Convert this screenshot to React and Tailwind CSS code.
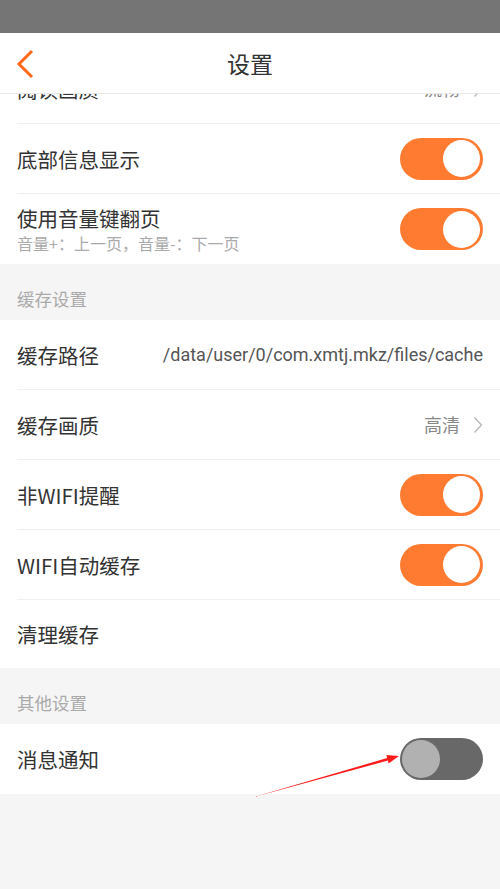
import React from "react";

const font = { fontFamily: '"Noto Sans CJK SC", "Noto Sans", sans-serif' };

function Toggle({ on }) {
  if (on) {
    return (
      <div className="w-[83px] h-[42px] rounded-full bg-[#fe7b31] flex items-center justify-end pr-[3px] shrink-0">
        <div className="w-[37px] h-[37px] rounded-full bg-white" />
      </div>
    );
  }
  return (
    <div className="w-[83px] h-[42px] rounded-full bg-[#686868] flex items-center justify-start pl-[2px] shrink-0">
      <div className="w-[38px] h-[38px] rounded-full bg-[#b1b1b1]" />
    </div>
  );
}

function Chevron() {
  return (
    <svg width="10" height="18" viewBox="0 0 10 18" className="ml-[13px]">
      <path d="M1.5 1.5 L8.5 9 L1.5 16.5" fill="none" stroke="#b5b5b5" strokeWidth="1.3" />
    </svg>
  );
}

function Row({ title, sub, right, last, h = "h-[70px]" }) {
  return (
    <div className="bg-white pl-[17px]">
      <div className={`${h} flex items-center pr-[17px] ${last ? "" : "border-b border-[#f0f0f0]"}`}>
        <div className="flex-1 flex flex-col justify-center">
          <div className="text-[20.5px] leading-[26px] text-[#333333]">{title}</div>
          {sub && <div className="text-[16px] leading-[20px] text-[#aaaaaa] mt-[2px]">{sub}</div>}
        </div>
        {right}
      </div>
    </div>
  );
}

function Section({ label }) {
  return (
    <div className="h-[56px] bg-[#f5f5f5] pl-[17px] flex items-end pb-[10px]">
      <span className="text-[17.5px] leading-[22px] text-[#aaaaaa]">{label}</span>
    </div>
  );
}

export default function App() {
  return (
    <div className="relative w-[500px] h-[889px] bg-[#f5f5f5] overflow-hidden" style={font}>
      <div className="h-[33px] bg-[#757575]" />
      <div className="h-[61px] bg-white border-b border-[#e8e8e8] flex items-center justify-center relative">
        <svg width="20" height="30" viewBox="0 0 20 30" className="absolute left-[16px] top-[16px]">
          <path d="M16 2 L3 15 L16 28" fill="none" stroke="#fe6a1a" strokeWidth="3" />
        </svg>
        <span className="text-[23px] text-[#333333]">设置</span>
      </div>
      <div className="h-[30px] overflow-hidden bg-white">
        <div className="-mt-[40px]">
          <Row
            title="阅读画质"
            right={
              <div className="flex items-center">
                <span className="text-[18px] text-[#888888]">流畅</span>
                <Chevron />
              </div>
            }
          />
        </div>
      </div>
      <Row title="底部信息显示" right={<Toggle on />} />
      <Row title="使用音量键翻页" sub="音量+：上一页，音量-：下一页" right={<Toggle on />} last />
      <Section label="缓存设置" />
      <Row
        title="缓存路径"
        right={<span className="text-[18px] text-[#555555]" style={{ fontFamily: 'Roboto, "Noto Sans", sans-serif' }}>/data/user/0/com.xmtj.mkz/files/cache</span>}
      />
      <Row
        title="缓存画质"
        right={
          <div className="flex items-center">
            <span className="text-[18px] text-[#888888]">高清</span>
            <Chevron />
          </div>
        }
      />
      <Row title="非WIFI提醒" right={<Toggle on />} />
      <Row title="WIFI自动缓存" right={<Toggle on />} />
      <Row title="清理缓存" last h="h-[68px]" />
      <Section label="其他设置" />
      <Row title="消息通知" right={<Toggle on={false} />} last />
      <svg className="absolute left-0 top-0 pointer-events-none" width="500" height="889" viewBox="0 0 500 889">
        <polygon
          points="254,797 387.85,760.55 388.6,763.6 399,756 386.4,755 387.15,758.05"
          fill="#ff1a1a"
        />
      </svg>
    </div>
  );
}
